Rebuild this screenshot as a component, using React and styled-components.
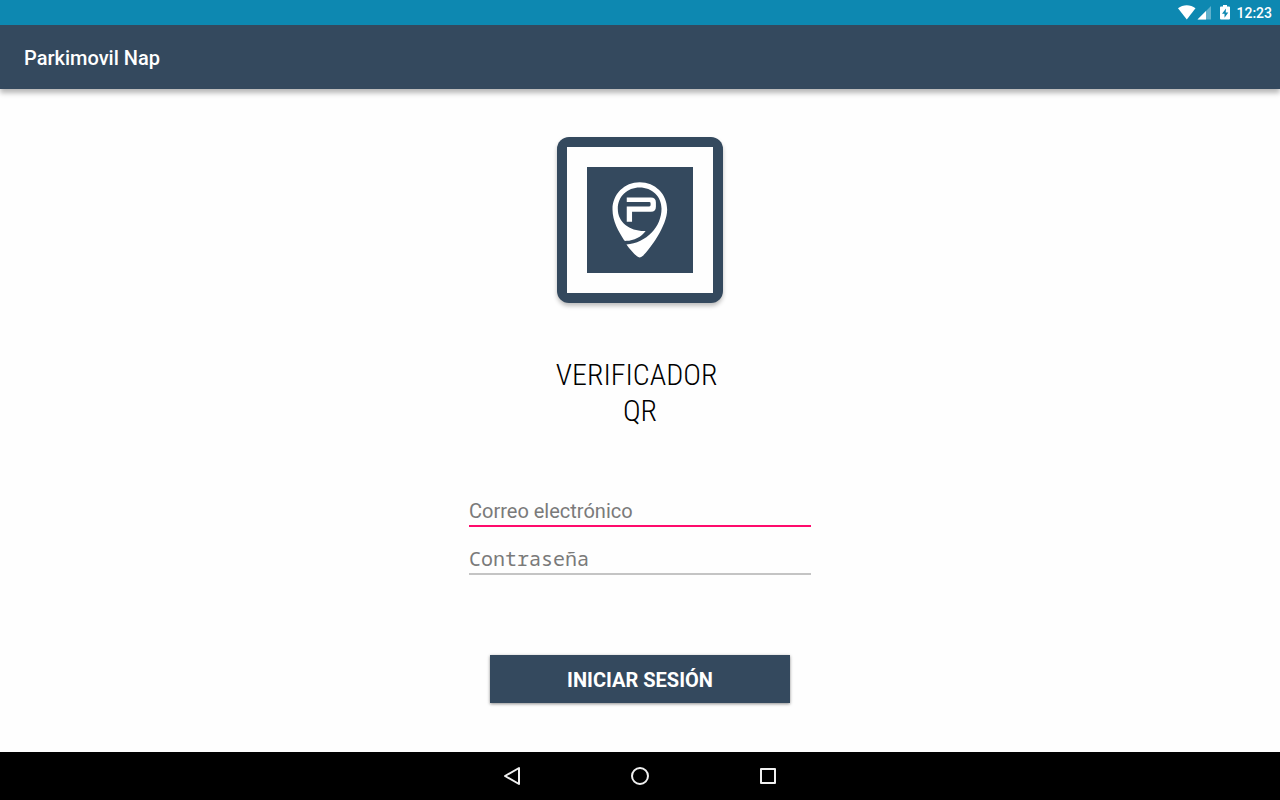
import React from "react";
import styled, { createGlobalStyle } from "styled-components";

const slate = "#34495e";

const GlobalStyle = createGlobalStyle`
  *, *::before, *::after { box-sizing: border-box; }
  body { margin: 0; background: #fefefe; font-family: Roboto, "Liberation Sans", sans-serif; }
`;

const Screen = styled.div`
  min-height: 100vh;
  display: flex;
  flex-direction: column;
`;

const StatusBar = styled.div`
  height: 25px;
  padding: 0 8px;
  display: flex;
  align-items: center;
  justify-content: flex-end;
  background: #0d88b1;
  color: #fff;
`;

const StatusIcons = styled.svg`
  width: 54px;
  height: 25px;
  margin-right: 4px;
`;

const Clock = styled.time`
  font-size: 14px;
  line-height: 25px;
  font-weight: 500;
  padding-top: 1px;
`;

const AppBar = styled.header`
  height: 64px;
  padding: 2px 24px 0;
  display: flex;
  align-items: center;
  background: ${slate};
  box-shadow: 0 4px 5px rgba(0, 0, 0, 0.28);
  clip-path: inset(0 0 -12px 0);
`;

const AppTitle = styled.h1`
  margin: 0;
  color: #fff;
  font-size: 20px;
  line-height: 24px;
  font-weight: 500;
`;

const Main = styled.main`
  flex: 1;
  padding: 48px 16px;
  display: flex;
  flex-direction: column;
  align-items: center;
`;

const LogoFrame = styled.div`
  padding: 10px;
  border-radius: 12px;
  background: ${slate};
  box-shadow: 0 3px 4px rgba(0, 0, 0, 0.25);
`;

const LogoMat = styled.div`
  padding: 20px;
  background: #fefefe;
  line-height: 0;
`;

const LogoMark = styled.svg`
  width: 106px;
  height: 106px;
  background: ${slate};
`;

const Heading = styled.h2`
  margin: 54px 0 0;
  color: #000;
  font-family: "Roboto Condensed", Roboto, sans-serif;
  font-size: 30px;
  line-height: 36px;
  font-weight: 300;
  font-stretch: condensed;
  text-align: center;
  white-space: pre-wrap;
`;

const Form = styled.form`
  width: 100%;
  max-width: 342px;
  margin-top: 66px;
  display: flex;
  flex-direction: column;
  align-items: center;
`;

const Field = styled.input`
  width: 100%;
  height: 32px;
  margin-bottom: 16px;
  padding: ${(p) => (p.$mono ? "0" : "2px 0 0")};
  border: 0;
  border-bottom: 2px solid ${(p) => (p.$active ? "#ff0a6c" : "#c4c4c4")};
  border-radius: 0;
  outline: 0;
  background: transparent;
  color: #212121;
  font-family: ${(p) => (p.$mono ? '"Noto Sans Mono", "DejaVu Sans Mono", monospace' : "Roboto, sans-serif")};
  font-size: 20px;
  line-height: 24px;
  &::placeholder { color: #7a7a7a; opacity: 1; }
`;

const SubmitButton = styled.button`
  width: 300px;
  height: 48px;
  margin-top: 64px;
  padding: 2px 0 0;
  border: 0;
  background: ${slate};
  box-shadow: 0 1px 3px rgba(0, 0, 0, 0.45);
  color: #fff;
  font-family: Roboto, sans-serif;
  font-size: 20px;
  line-height: 24px;
  font-weight: 700;
`;

const NavBar = styled.nav`
  height: 48px;
  display: flex;
  justify-content: center;
  background: #000;
`;

const NavButton = styled.button`
  width: 128px;
  padding: 0;
  border: 0;
  display: grid;
  place-items: center;
  background: none;
`;

const NavIcon = styled.svg`
  width: 20px;
  height: 20px;
  fill: none;
  stroke: #f0f0f0;
  stroke-width: 2;
  stroke-linejoin: round;
`;

function PinLogo() {
  return (
    <LogoMark viewBox="-39 -12 320 320" role="img" aria-label="Parkimovil">
      <path
        fill="#fff"
        fillRule="evenodd"
        d="M120 34C74 34 38 70 38 116C38 152 56 181 73 209Q75 212 80 211C102 210 126 199 138 181C92 183 54 157 54 114C54 77 83 50 120 50C157 50 186 77 186 114C186 168 141 217 80 222C89 235 102 249 111 257Q120 265 129 257C151 235 203 166 203 116C203 70 167 34 120 34Z"
      />
      <path fill="#fff" d="M81 80H154Q169 80 169 95V108Q169 123 154 123H97V153H81V107H149Q153 107 153 103V98Q153 94 149 94H81Z" />
    </LogoMark>
  );
}

export default function App() {
  return (
    <>
      <GlobalStyle />
      <Screen>
        <StatusBar>
          <StatusIcons viewBox="0 0 54 25" aria-hidden="true">
            <path fill="#fff" d="M0 8.3C5 4.2 12.5 4.2 17.5 8.3L8.8 19.5Z" />
            <path fill="#fff" fillOpacity=".35" d="M33 6V19.5H19.5Z" />
            <path fill="#fff" d="M28 11V19.5H19.5Z" />
            <path fill="#fff" fillRule="evenodd" d="M45 5h4v1.5h2q1 0 1 1v11q0 1-1 1h-8q-1 0-1-1v-11q0-1 1-1h2ZM48 8.5L44 13.7h2.5V17.8L50.3 12.5h-2.6Z" />
          </StatusIcons>
          <Clock>12:23</Clock>
        </StatusBar>
        <AppBar>
          <AppTitle>Parkimovil Nap</AppTitle>
        </AppBar>
        <Main>
          <LogoFrame>
            <LogoMat>
              <PinLogo />
            </LogoMat>
          </LogoFrame>
          <Heading>
            VERIFICADOR&nbsp;
            <br />
            QR
          </Heading>
          <Form onSubmit={(e) => e.preventDefault()}>
            <Field $active type="email" aria-label="Correo electrónico" placeholder="Correo electrónico" />
            <Field $mono type="password" aria-label="Contraseña" placeholder="Contraseña" />
            <SubmitButton type="submit">INICIAR SESIÓN</SubmitButton>
          </Form>
        </Main>
        <NavBar>
          <NavButton type="button" aria-label="Atrás">
            <NavIcon viewBox="0 0 20 20"><path d="M17 2V18L3 10Z" /></NavIcon>
          </NavButton>
          <NavButton type="button" aria-label="Inicio">
            <NavIcon viewBox="0 0 20 20"><circle cx="10" cy="10" r="8" /></NavIcon>
          </NavButton>
          <NavButton type="button" aria-label="Recientes">
            <NavIcon viewBox="0 0 20 20"><rect x="3" y="3" width="14" height="14" /></NavIcon>
          </NavButton>
        </NavBar>
      </Screen>
    </>
  );
}
